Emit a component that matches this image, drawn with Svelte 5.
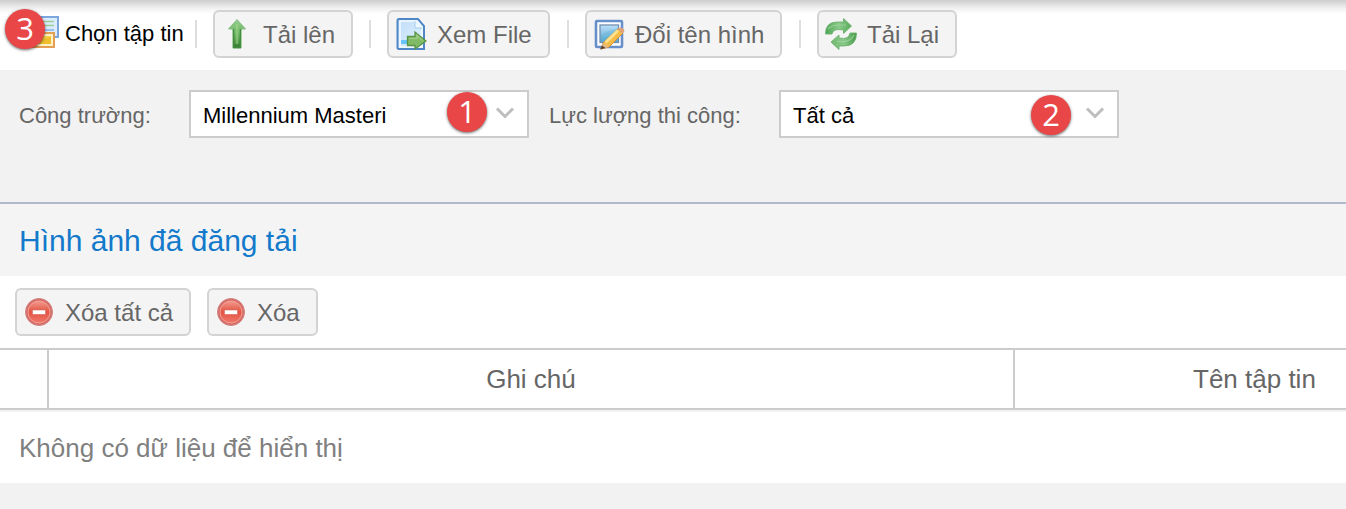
<script>
  const filters = [
    { label: 'Công trường:', value: 'Millennium Masteri', step: 1 },
    { label: 'Lực lượng thi công:', value: 'Tất cả', step: 2 },
  ];
  const actions = [
    { icon: 'up', text: 'Tải lên', width: 140, gap: 11 },
    { icon: 'view', text: 'Xem File', width: 163, gap: 16 },
    { icon: 'edit', text: 'Đổi tên hình', width: 197, gap: 17 },
    { icon: 'reload', text: 'Tải Lại', width: 140, gap: 17 },
  ];
  const removals = [
    { text: 'Xóa tất cả', width: 176 },
    { text: 'Xóa', width: 111 },
  ];
</script>

{#snippet icon(name)}
  <svg class="icon" viewBox="0 0 32 32" width="32" height="32" aria-hidden="true">
    {#if name === 'up'}
      <path d="M16 1.5 24.5 11H20V30H12V11H7.5Z" fill="url(#arrowGreen)" stroke="#86bd82" stroke-width="1" />
      <path d="M12.5 11V29.5H19.5V11" fill="none" stroke="#438d3e" stroke-width="1.3" />
      <path d="M16 6V26" stroke="#a5d68c" stroke-width="2.5" opacity=".55" />
    {:else if name === 'view'}
      <path d="M4 1H23L29 8V31H4Q2.5 31 2.5 29.5V2.5Q2.5 1 4 1Z" fill="url(#paperBlue)" stroke="#4f86c6" stroke-width="2" />
      <path d="M5 3H22L27 9V29H5Z" fill="none" stroke="#f5fbff" stroke-width="1.5" />
      <path d="M20 3V10H27" fill="#eef8ff" stroke="#a5cdf0" stroke-width="1" />
      <path d="M6 22H13V26H6Z" fill="#67c4fa" />
      <path d="M12.5 18.5H20V14L31 23 20 31V27.5H12.5Z" fill="#80ba64" stroke="#579447" stroke-width="1.3" />
      <path d="M14.5 20.5H22V17.5L27.5 22.5" fill="none" stroke="#9bcb82" stroke-width="1.5" />
    {:else if name === 'edit'}
      <rect x="3" y="3" width="26" height="26" rx="1" fill="#fff" stroke="#6790ca" stroke-width="2.6" />
      <rect x="7" y="7" width="18.5" height="17.5" fill="url(#photoBlue)" stroke="#7190ae" stroke-width="1.3" />
      <path d="M8 17Q16 12 25 10V24H8Z" fill="#65b4ce" opacity=".35" />
      <path d="M25 11 30 15 16 29 8 31 10 25Z" fill="#f5bd48" stroke="#cf9143" stroke-width="1" />
      <path d="M12.5 24.5 25 12.5" stroke="#ffe28a" stroke-width="3" />
      <path d="M24.5 11 27 9.5Q31 10 31.5 13L29.5 15.5Z" fill="#e0a277" />
      <path d="M10 25 15.5 29 8 31Z" fill="#e3bb90" />
      <path d="M9 27.5 12.5 30 7 31.5Z" fill="#574233" />
    {:else if name === 'reload'}
      <path d="M.5 16Q.5 4 12 4H18.5V.5L26.5 8 18.5 15.5V12Q8 10 7 16Z" fill="url(#reloadTop)" stroke="#64ad68" stroke-width=".8" />
      <path d="M3 11Q7 7 13 7H21" fill="none" stroke="#a6d6a4" stroke-width="1.2" opacity=".7" />
      <path d="M31.5 15Q31.5 28 19 28H14V31.5L6 24 14 17V20Q24 22 25 15Z" fill="url(#reloadBottom)" stroke="#64ad68" stroke-width=".8" />
      <path d="M12 23.5H19Q26 23 29 17" fill="none" stroke="#a7dba6" stroke-width="1.2" opacity=".7" />
    {:else if name === 'files'}
      <rect x="6" y="1" width="25" height="20" fill="#dcecff" stroke="#7ba6de" stroke-width="2" />
      <path d="M10 5.5H27M10 9.5H27" stroke="#9ccd93" stroke-width="1.5" />
      <path d="M10 14H27" stroke="#86b3e6" stroke-width="1.5" />
      <rect x="2" y="17" width="25" height="14" fill="#fff1c6" stroke="#e3a055" stroke-width="2" />
      <rect x="5" y="20" width="19" height="8" fill="#f6d34a" />
      <path d="M5 27 16 23 24 21V28H5Z" fill="#eebe2c" />
    {:else}
      <circle cx="16" cy="16" r="13.5" fill="#d96c67" stroke="#cf8581" />
      <circle cx="16" cy="16" r="11" fill="url(#stopRed)" stroke="#f0a098" stroke-width="1" />
      <rect x="9.5" y="14" width="13" height="4.4" fill="#fff" stroke="#d96860" stroke-width=".6" />
    {/if}
  </svg>
{/snippet}

<svg class="defs" width="0" height="0" aria-hidden="true">
  <defs>
    <linearGradient id="arrowGreen" x2="0" y2="1"><stop stop-color="#96cf91" /><stop offset=".5" stop-color="#69b560" /><stop offset="1" stop-color="#347b2f" /></linearGradient>
    <linearGradient id="paperBlue" x2="1" y2="1"><stop stop-color="#bfdcf7" /><stop offset="1" stop-color="#e2f3ff" /></linearGradient>
    <linearGradient id="photoBlue" x2="0" y2="1"><stop stop-color="#c0e2fa" /><stop offset="1" stop-color="#4b9fce" /></linearGradient>
    <linearGradient id="reloadTop" x2="1"><stop stop-color="#4da553" /><stop offset=".5" stop-color="#8aca89" /><stop offset="1" stop-color="#59ab5a" /></linearGradient>
    <linearGradient id="reloadBottom" x2="1"><stop stop-color="#70b970" /><stop offset=".5" stop-color="#8aca89" /><stop offset="1" stop-color="#489b4d" /></linearGradient>
    <linearGradient id="stopRed" x2="0" y2="1"><stop stop-color="#f29a8c" /><stop offset=".5" stop-color="#e35343" /><stop offset="1" stop-color="#f0776b" /></linearGradient>
  </defs>
</svg>

<main>
  <header class="toolbar">
    <div class="picker">
      {@render icon('files')}
      <span>Chọn tập tin</span>
      <b class="badge step3">3</b>
    </div>
    {#each actions as action}
      <i class="separator" style:margin-left="{action.gap}px"></i>
      <button style:width="{action.width}px">{@render icon(action.icon)}<span>{action.text}</span></button>
    {/each}
  </header>

  <section class="filters">
    {#each filters as filter}
      <div class="label">{filter.label}</div>
      <div class="select">
        <span>{filter.value}</span>
        <svg width="20" height="14" viewBox="0 0 20 14"><path d="M2 2.5 10 10.5 18 2.5" fill="none" stroke="#bebebe" stroke-width="3" /></svg>
        <b class="badge step{filter.step}">{filter.step}</b>
      </div>
    {/each}
  </section>

  <h1>Hình ảnh đã đăng tải</h1>

  <section class="removals">
    {#each removals as item}
      <button style:width="{item.width}px">{@render icon('stop')}<span>{item.text}</span></button>
    {/each}
  </section>

  <div class="columns">
    <div></div>
    <div>Ghi chú</div>
    <div>Tên tập tin</div>
  </div>
  <div class="empty">Không có dữ liệu để hiển thị</div>
</main>

<style>
  :global(body) { margin: 0; overflow: hidden; background: #f2f2f2; }
  main {
    width: 1346px; height: 509px; overflow: hidden; box-sizing: border-box;
    font-family: "Liberation Sans", Arial, sans-serif; color: #666; background: #f2f2f2;
  }
  main * { box-sizing: border-box; }
  .defs { position: absolute; }
  .icon { display: block; flex: none; }
  .toolbar {
    height: 70px; padding: 10px 0 12px 27px; display: flex; align-items: center;
    background: linear-gradient(#ccc 0, #dadada 3px, #f0f0f0 8px, #fff 14px);
  }
  .picker { position: relative; display: flex; align-items: center; width: 157px; height: 48px; color: #000; font-size: 22px; white-space: nowrap; }
  .picker .icon { margin-top: -4px; }
  .picker span { margin-left: 6px; }
  .separator { width: 2px; height: 28px; background: #dedede; margin-right: 16px; flex: none; }
  button {
    display: flex; align-items: center; height: 48px; padding: 0 0 0 6px; margin: 0; flex: none;
    border: 2px solid #d3d3d3; border-radius: 6px; background: #f4f4f4;
    font: 24px "Liberation Sans", Arial, sans-serif; color: #666; white-space: nowrap;
  }
  button span { margin-left: 10px; padding-top: 1px; }
  .badge {
    position: absolute; width: 40px; height: 40px; border-radius: 50%;
    background: #e94648; color: #fff; box-shadow: 0 1px 3px #0009;
    font: 400 31px/38px "Open Sans", sans-serif; text-align: center;
  }
  .step3 { left: -22px; top: -1px; }
  .step1 { left: 256px; top: 0; }
  .step2 { left: 250px; top: 3px; }
  .filters { height: 132px; padding: 20px 0 0 19px; display: flex; align-items: flex-start; font-size: 22px; white-space: nowrap; }
  .label { width: 170px; line-height: 52px; }
  .select + .label { width: 230px; margin-left: 20px; }
  .select {
    position: relative; display: flex; align-items: center; justify-content: space-between;
    width: 340px; height: 48px; padding: 4px 12px 0; border: 2px solid #ccc; background: #fff; color: #000;
  }
  .select svg { margin-top: -6px; }
  h1 {
    margin: 0; height: 74px; padding-left: 19px; border-top: 2px solid #b2b8cc; background: #f4f4f4;
    color: #1279cb; font-size: 30px; font-weight: 400; line-height: 74px;
  }
  .removals { display: flex; gap: 16px; height: 72px; padding: 12px 15px; background: #fff; }
  .columns {
    display: grid; grid-template-columns: 49px 966px 1fr; grid-template-rows: 60px; height: 64px;
    border-top: 2px solid #ccc; border-bottom: 2px solid #f2f2f2; background: #fff;
    font-size: 26px; line-height: 59px; text-align: center;
  }
  .columns div { border-right: 2px solid #ccc; border-bottom: 2px solid #ccc; }
  .columns div:last-child { border-right: 0; padding-left: 178px; text-align: left; }
  .empty { height: 71px; padding-left: 19px; background: #fff; color: #808080; font-size: 26px; line-height: 73px; }
</style>
